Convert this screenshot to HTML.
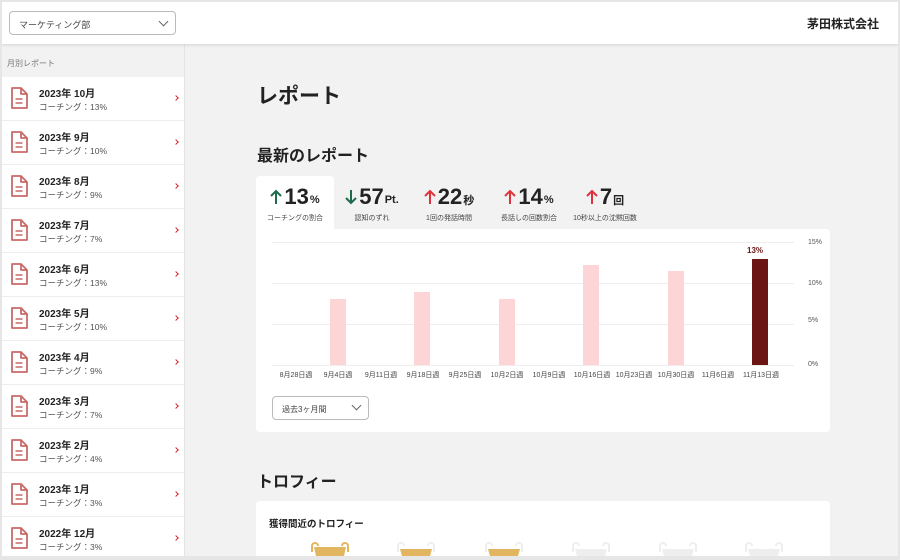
<!DOCTYPE html>
<html><head><meta charset="utf-8"><style>
*{box-sizing:border-box;margin:0;padding:0}
html{width:900px;height:560px;overflow:hidden}
body{width:900px;height:560px;overflow:hidden;background:#f2f2f2;font-family:"Liberation Sans","Noto Sans CJK JP",sans-serif;color:#222;position:relative}
.frame{position:absolute;left:0;top:0;width:900px;height:560px;border:2px solid #e6e6e6;border-bottom:4px solid #e6e6e6;pointer-events:none;z-index:10}
.hdr{position:absolute;left:0;top:0;width:900px;height:44px;background:#fff;box-shadow:0 1px 3px rgba(0,0,0,.12);z-index:5}
.sel{position:absolute;left:9px;top:11px;width:167px;height:24px;border:1px solid #bbb;border-radius:4px;font-size:9px;color:#444;padding:6px 0 0 9px}
.chev{position:absolute;width:7px;height:7px;border-right:1.3px solid #666;border-bottom:1.3px solid #666;transform:rotate(45deg)}
.co{position:absolute;right:21px;top:15px;font-size:12px;font-weight:bold;color:#222}
.side{position:absolute;left:0;top:44px;width:185px;height:516px;background:#fff;border-right:1px solid #e4e4e4}
.lab{height:33px;background:#f2f2f2;font-size:8px;color:#777;padding:14px 0 0 7px}
.it{height:44px;border-bottom:1px solid #eee;position:relative}
.it svg{position:absolute;left:10px;top:10px}
.it b{position:absolute;left:39px;top:8px;font-size:10px;color:#222}
.it span{position:absolute;left:39px;top:24px;font-size:8.5px;color:#555}
.it i{position:absolute;left:174px;top:19px;width:4px;height:4px;border-right:1.8px solid #d02b2b;border-top:1.8px solid #d02b2b;transform:rotate(45deg)}
h1{position:absolute;left:257px;top:80px;font-size:21px;font-weight:bold}
h2{position:absolute;left:257px;font-size:16px;font-weight:bold}
.tab{position:absolute;top:177px;height:52px;text-align:center}
.tab .v{font-size:22px;font-weight:bold;color:#222;white-space:nowrap;display:flex;align-items:center;justify-content:center;height:26px}
.tab .v svg{margin-right:2px}
.tab .v small{font-size:11px;margin-left:1px;margin-top:6px}
.tab .l{font-size:7px;color:#444;margin-top:3px}
.card{position:absolute;background:#fff;border-radius:4px}
.gl{position:absolute;left:272px;width:522px;height:1px;background:#eee}
.yl{position:absolute;left:808px;font-size:7px;color:#555}
.xl{position:absolute;top:370px;font-size:7px;color:#444;width:60px;text-align:center;margin-left:-30px}
.bar{position:absolute;width:16px;height:auto;background:#fdd5d6}
.cup{position:absolute;top:542px;width:44px;height:14px}
</style></head><body>
<div class="hdr">
 <div class="sel">マーケティング部<div class="chev" style="left:150px;top:6px"></div></div>
 <div class="co">茅田株式会社</div>
</div>
<div class="side">
 <div class="lab">月別レポート</div>
 <div class="it"><svg width="18" height="22" viewBox="0 0 18 22"><path d="M2 1h9l6 6v14H2z M11 1v6h6" fill="none" stroke="#c96a6a" stroke-width="1.8" stroke-linejoin="round"/><path d="M5.5 12h7M5.5 16h7" stroke="#c96a6a" stroke-width="1.6"/></svg><b>2023年 10月</b><span>コーチング：13%</span><i></i></div>
 <div class="it"><svg width="18" height="22" viewBox="0 0 18 22"><path d="M2 1h9l6 6v14H2z M11 1v6h6" fill="none" stroke="#c96a6a" stroke-width="1.8" stroke-linejoin="round"/><path d="M5.5 12h7M5.5 16h7" stroke="#c96a6a" stroke-width="1.6"/></svg><b>2023年 9月</b><span>コーチング：10%</span><i></i></div>
 <div class="it"><svg width="18" height="22" viewBox="0 0 18 22"><path d="M2 1h9l6 6v14H2z M11 1v6h6" fill="none" stroke="#c96a6a" stroke-width="1.8" stroke-linejoin="round"/><path d="M5.5 12h7M5.5 16h7" stroke="#c96a6a" stroke-width="1.6"/></svg><b>2023年 8月</b><span>コーチング：9%</span><i></i></div>
 <div class="it"><svg width="18" height="22" viewBox="0 0 18 22"><path d="M2 1h9l6 6v14H2z M11 1v6h6" fill="none" stroke="#c96a6a" stroke-width="1.8" stroke-linejoin="round"/><path d="M5.5 12h7M5.5 16h7" stroke="#c96a6a" stroke-width="1.6"/></svg><b>2023年 7月</b><span>コーチング：7%</span><i></i></div>
 <div class="it"><svg width="18" height="22" viewBox="0 0 18 22"><path d="M2 1h9l6 6v14H2z M11 1v6h6" fill="none" stroke="#c96a6a" stroke-width="1.8" stroke-linejoin="round"/><path d="M5.5 12h7M5.5 16h7" stroke="#c96a6a" stroke-width="1.6"/></svg><b>2023年 6月</b><span>コーチング：13%</span><i></i></div>
 <div class="it"><svg width="18" height="22" viewBox="0 0 18 22"><path d="M2 1h9l6 6v14H2z M11 1v6h6" fill="none" stroke="#c96a6a" stroke-width="1.8" stroke-linejoin="round"/><path d="M5.5 12h7M5.5 16h7" stroke="#c96a6a" stroke-width="1.6"/></svg><b>2023年 5月</b><span>コーチング：10%</span><i></i></div>
 <div class="it"><svg width="18" height="22" viewBox="0 0 18 22"><path d="M2 1h9l6 6v14H2z M11 1v6h6" fill="none" stroke="#c96a6a" stroke-width="1.8" stroke-linejoin="round"/><path d="M5.5 12h7M5.5 16h7" stroke="#c96a6a" stroke-width="1.6"/></svg><b>2023年 4月</b><span>コーチング：9%</span><i></i></div>
 <div class="it"><svg width="18" height="22" viewBox="0 0 18 22"><path d="M2 1h9l6 6v14H2z M11 1v6h6" fill="none" stroke="#c96a6a" stroke-width="1.8" stroke-linejoin="round"/><path d="M5.5 12h7M5.5 16h7" stroke="#c96a6a" stroke-width="1.6"/></svg><b>2023年 3月</b><span>コーチング：7%</span><i></i></div>
 <div class="it"><svg width="18" height="22" viewBox="0 0 18 22"><path d="M2 1h9l6 6v14H2z M11 1v6h6" fill="none" stroke="#c96a6a" stroke-width="1.8" stroke-linejoin="round"/><path d="M5.5 12h7M5.5 16h7" stroke="#c96a6a" stroke-width="1.6"/></svg><b>2023年 2月</b><span>コーチング：4%</span><i></i></div>
 <div class="it"><svg width="18" height="22" viewBox="0 0 18 22"><path d="M2 1h9l6 6v14H2z M11 1v6h6" fill="none" stroke="#c96a6a" stroke-width="1.8" stroke-linejoin="round"/><path d="M5.5 12h7M5.5 16h7" stroke="#c96a6a" stroke-width="1.6"/></svg><b>2023年 1月</b><span>コーチング：3%</span><i></i></div>
 <div class="it"><svg width="18" height="22" viewBox="0 0 18 22"><path d="M2 1h9l6 6v14H2z M11 1v6h6" fill="none" stroke="#c96a6a" stroke-width="1.8" stroke-linejoin="round"/><path d="M5.5 12h7M5.5 16h7" stroke="#c96a6a" stroke-width="1.6"/></svg><b>2022年 12月</b><span>コーチング：3%</span><i></i></div>
</div>
<h1>レポート</h1>
<h2 style="top:142px">最新のレポート</h2>
<div class="card" style="left:256px;top:176px;width:78px;height:60px;border-radius:4px 4px 0 0"></div>
<div class="card" style="left:256px;top:229px;width:574px;height:203px"></div>
<div class="tab" style="left:256px;width:78px;top:184px"><div class="v"><svg width="12" height="16" viewBox="0 0 12 16"><path d="M6 15V2M1 7l5-5 5 5" fill="none" stroke="#1e6b4a" stroke-width="2"/></svg>13<small>%</small></div><div class="l">コーチングの割合</div></div>
<div class="tab" style="left:340px;width:64px;top:184px"><div class="v"><svg width="12" height="16" viewBox="0 0 12 16"><path d="M6 1v13M1 9l5 5 5-5" fill="none" stroke="#1e6b4a" stroke-width="2"/></svg>57<small>Pt.</small></div><div class="l">認知のずれ</div></div>
<div class="tab" style="left:414px;width:70px;top:184px"><div class="v"><svg width="12" height="16" viewBox="0 0 12 16"><path d="M6 15V2M1 7l5-5 5 5" fill="none" stroke="#e0323a" stroke-width="2"/></svg>22<small>秒</small></div><div class="l">1回の発話時間</div></div>
<div class="tab" style="left:494px;width:70px;top:184px"><div class="v"><svg width="12" height="16" viewBox="0 0 12 16"><path d="M6 15V2M1 7l5-5 5 5" fill="none" stroke="#e0323a" stroke-width="2"/></svg>14<small>%</small></div><div class="l">長話しの回数割合</div></div>
<div class="tab" style="left:570px;width:70px;top:184px"><div class="v"><svg width="12" height="16" viewBox="0 0 12 16"><path d="M6 15V2M1 7l5-5 5 5" fill="none" stroke="#e0323a" stroke-width="2"/></svg>7<small>回</small></div><div class="l">10秒以上の沈黙回数</div></div>
<div class="gl" style="top:242px"></div><div class="gl" style="top:283px"></div><div class="gl" style="top:324px"></div><div class="gl" style="top:365px"></div>
<div class="yl" style="top:239px">15%</div><div class="yl" style="top:280px">10%</div><div class="yl" style="top:317px">5%</div><div class="yl" style="top:361px">0%</div>
<div class="bar" style="left:330px;top:299px;height:66px"></div>
<div class="bar" style="left:414px;top:292px;height:73px"></div>
<div class="bar" style="left:499px;top:299px;height:66px"></div>
<div class="bar" style="left:583px;top:265px;height:100px"></div>
<div class="bar" style="left:668px;top:271px;height:94px"></div>
<div class="bar" style="left:752px;top:259px;height:106px;background:#6b1515"></div>
<div style="position:absolute;left:747px;top:246px;font-size:8px;font-weight:bold;color:#6b1515">13%</div>
<div class="xl" style="left:296px">8月28日週</div><div class="xl" style="left:338px">9月4日週</div><div class="xl" style="left:381px">9月11日週</div><div class="xl" style="left:423px">9月18日週</div><div class="xl" style="left:465px">9月25日週</div><div class="xl" style="left:507px">10月2日週</div><div class="xl" style="left:549px">10月9日週</div><div class="xl" style="left:592px">10月16日週</div><div class="xl" style="left:634px">10月23日週</div><div class="xl" style="left:676px">10月30日週</div><div class="xl" style="left:718px">11月6日週</div><div class="xl" style="left:761px">11月13日週</div>
<div style="position:absolute;left:272px;top:396px;width:97px;height:24px;border:1px solid #bbb;border-radius:4px;font-size:8px;color:#444;padding:7px 0 0 9px;background:#fff">過去3ヶ月間<div class="chev" style="left:80px;top:5px"></div></div>
<h2 style="top:468px">トロフィー</h2>
<div class="card" style="left:256px;top:501px;width:574px;height:59px;border-radius:4px 4px 0 0"></div>
<div style="position:absolute;left:269px;top:516px;font-size:9.5px;font-weight:bold">獲得間近のトロフィー</div>
<svg class="cup" style="left:308px" viewBox="0 0 44 14"><path d="M4 10V4a3 3 0 0 1 6 0M40 10V4a3 3 0 0 0-6 0" fill="none" stroke="#e2b660" stroke-width="2"/><path d="M6 5h32l-2 9H8z" fill="#e2b660"/></svg>
<svg class="cup" style="left:394px" viewBox="0 0 44 14"><path d="M4 10V4a3 3 0 0 1 6 0M40 10V4a3 3 0 0 0-6 0" fill="none" stroke="#eee" stroke-width="2"/><path d="M6 7h32l-2 7H8z" fill="#e2b660"/></svg>
<svg class="cup" style="left:482px" viewBox="0 0 44 14"><path d="M4 10V4a3 3 0 0 1 6 0M40 10V4a3 3 0 0 0-6 0" fill="none" stroke="#eee" stroke-width="2"/><path d="M6 7h32l-2 7H8z" fill="#e2b660"/></svg>
<svg class="cup" style="left:569px" viewBox="0 0 44 14"><path d="M4 10V4a3 3 0 0 1 6 0M40 10V4a3 3 0 0 0-6 0" fill="none" stroke="#eee" stroke-width="2"/><path d="M6 7h32l-2 7H8z" fill="#eee"/></svg>
<svg class="cup" style="left:656px" viewBox="0 0 44 14"><path d="M4 10V4a3 3 0 0 1 6 0M40 10V4a3 3 0 0 0-6 0" fill="none" stroke="#eee" stroke-width="2"/><path d="M6 7h32l-2 7H8z" fill="#eee"/></svg>
<svg class="cup" style="left:742px" viewBox="0 0 44 14"><path d="M4 10V4a3 3 0 0 1 6 0M40 10V4a3 3 0 0 0-6 0" fill="none" stroke="#eee" stroke-width="2"/><path d="M6 7h32l-2 7H8z" fill="#eee"/></svg>
<div class="frame"></div>
</body></html>
